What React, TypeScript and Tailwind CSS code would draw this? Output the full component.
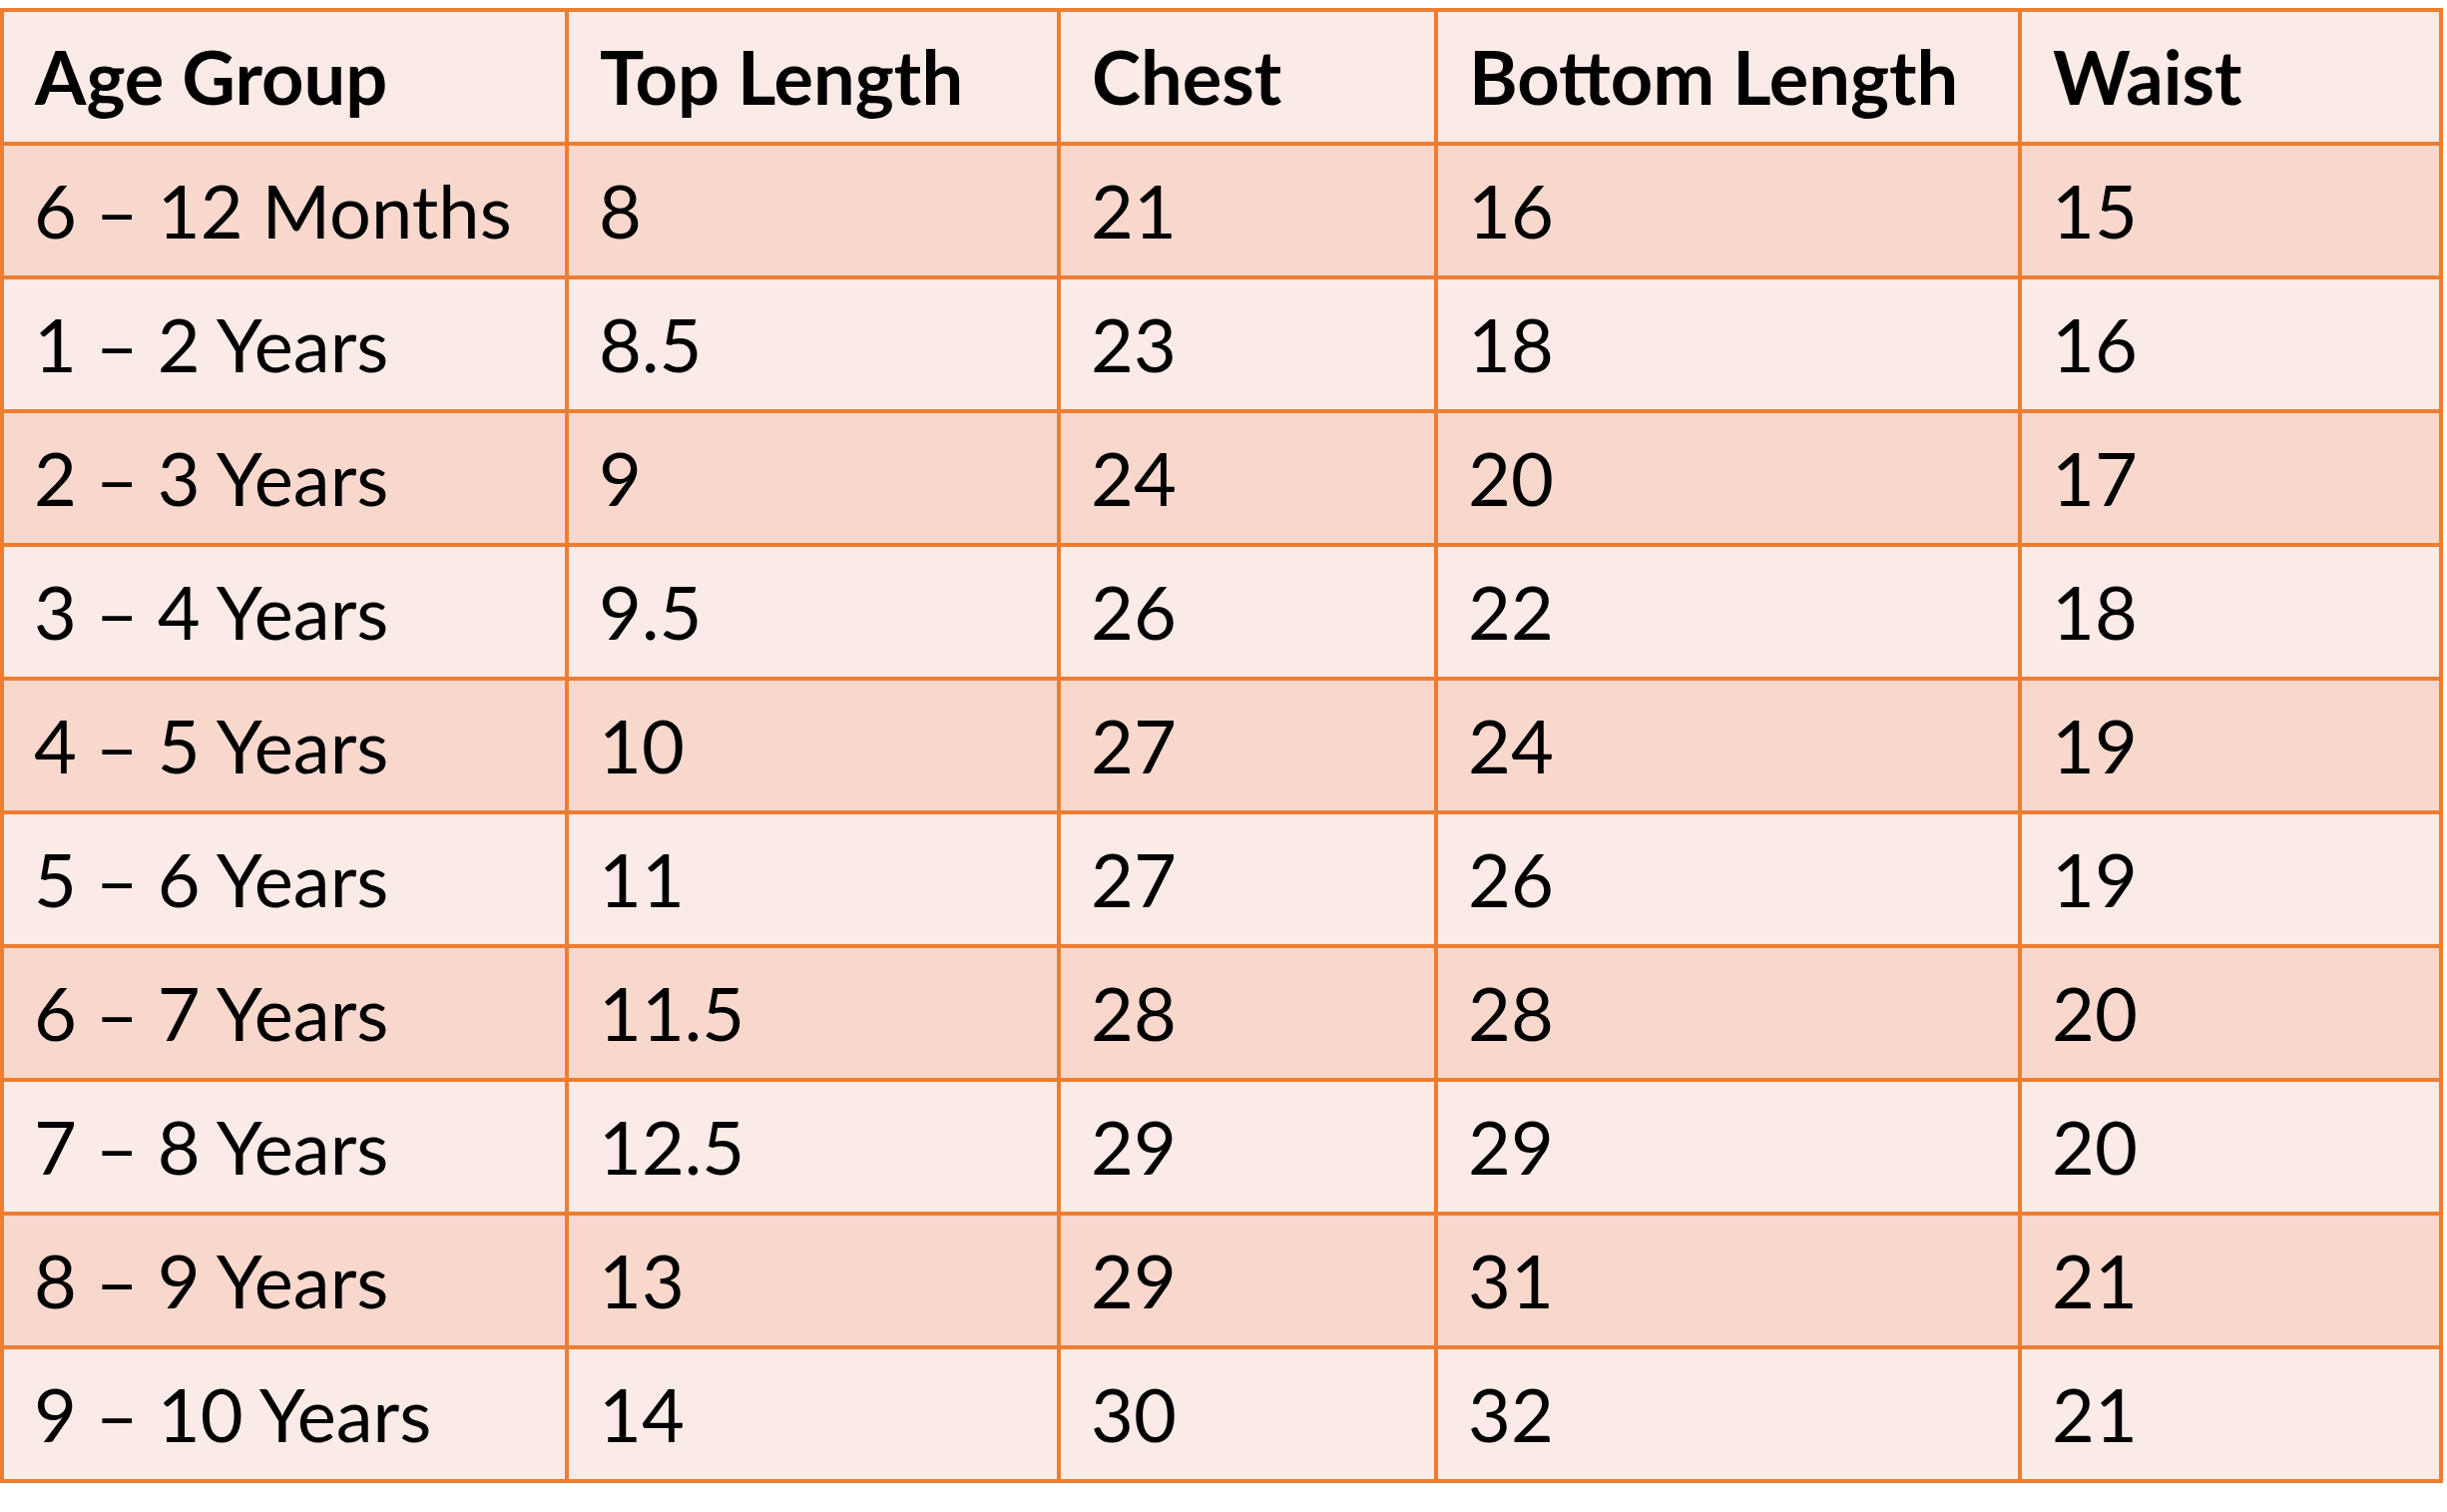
const headers = ["Age Group", "Top Length", "Chest", "Bottom Length", "Waist"];

const rows: string[][] = [
  ["6 – 12 Months", "8", "21", "16", "15"],
  ["1 – 2 Years", "8.5", "23", "18", "16"],
  ["2 – 3 Years", "9", "24", "20", "17"],
  ["3 – 4 Years", "9.5", "26", "22", "18"],
  ["4 – 5 Years", "10", "27", "24", "19"],
  ["5 – 6 Years", "11", "27", "26", "19"],
  ["6 – 7 Years", "11.5", "28", "28", "20"],
  ["7 – 8 Years", "12.5", "29", "29", "20"],
  ["8 – 9 Years", "13", "29", "31", "21"],
  ["9 – 10 Years", "14", "30", "32", "21"],
];

export default function App() {
  return (
    <div className="min-h-screen bg-white pt-[8px] font-['Lato',sans-serif] text-black">
      <div className="grid w-fit grid-cols-[562px_489px_374px_581px_418px] auto-rows-[130px] gap-[4px] bg-[#ED7D31] p-[4px]">
        {headers.map((label) => (
          <div
            key={label}
            className="flex items-center bg-[#FBEBE7] pl-[31px] text-[74px] font-bold leading-none"
          >
            {label}
          </div>
        ))}
        {rows.map((row, rowIndex) =>
          row.map((value, colIndex) => (
            <div
              key={`${rowIndex}-${colIndex}`}
              className={
                rowIndex % 2 === 0
                  ? "flex items-center bg-[#F8D8CD] pl-[30px] text-[74px] leading-none"
                  : "flex items-center bg-[#FBEBE7] pl-[30px] text-[74px] leading-none"
              }
            >
              {value}
            </div>
          )),
        )}
      </div>
    </div>
  );
}
